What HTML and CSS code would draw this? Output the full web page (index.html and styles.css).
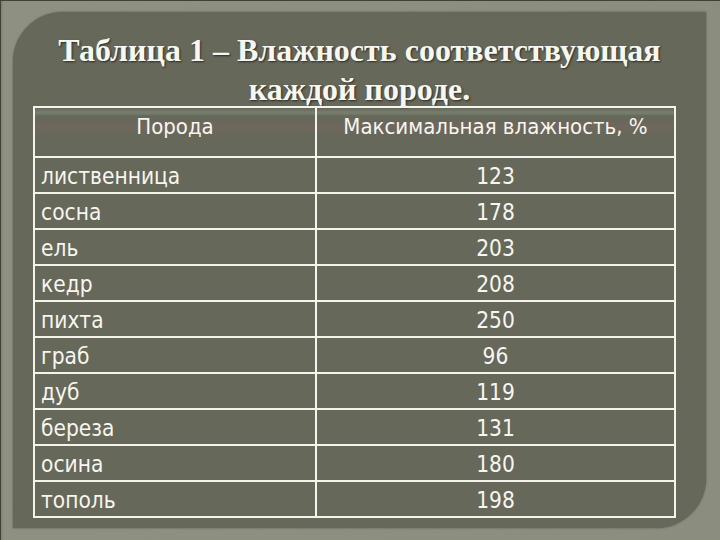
FILE: index.html
```html
<!DOCTYPE html>
<html lang="ru">
<head>
<meta charset="utf-8">
<title>Таблица 1</title>
<link rel="stylesheet" href="styles.css">
</head>
<body>
<div class="frame">
  <div class="panel">
    <h1 class="title">Таблица 1 – Влажность соответствующая<br>каждой породе.</h1>
    <table class="data">
      <thead>
        <tr><th class="c1">Порода</th><th class="c2">Максимальная влажность, %</th></tr>
      </thead>
      <tbody>
        <tr><td class="c1">лиственница</td><td class="c2">123</td></tr>
        <tr><td class="c1">сосна</td><td class="c2">178</td></tr>
        <tr><td class="c1">ель</td><td class="c2">203</td></tr>
        <tr><td class="c1">кедр</td><td class="c2">208</td></tr>
        <tr><td class="c1">пихта</td><td class="c2">250</td></tr>
        <tr><td class="c1">граб</td><td class="c2">96</td></tr>
        <tr><td class="c1">дуб</td><td class="c2">119</td></tr>
        <tr><td class="c1">береза</td><td class="c2">131</td></tr>
        <tr><td class="c1">осина</td><td class="c2">180</td></tr>
        <tr><td class="c1">тополь</td><td class="c2">198</td></tr>
      </tbody>
    </table>
  </div>
</div>
</body>
</html>
```
FILE: styles.css
```css
html, body {
  margin: 0;
  padding: 0;
}
body {
  width: 720px;
  height: 540px;
  overflow: hidden;
  background: #8b8e7e;
}
.frame {
  box-sizing: border-box;
  width: 720px;
  height: 540px;
  padding: 11px 14px 12px 12px;
  border-top: 1px solid #3f4135;
  border-left: 1px solid #3f4135;
  background:
    linear-gradient(90deg, #7f8272 0, #8e9181 3px, #8b8e7e 100%);
  display: flex;
}
.panel {
  flex: 1;
  background: #66685a;
  border-radius: 50px 0 50px 0;
  box-shadow: 0 0 2px rgba(40, 42, 34, 0.6);
  display: flex;
  flex-direction: column;
}
.title {
  margin: 19px 0 0 0;
  font-family: "Liberation Serif", "Times New Roman", serif;
  font-weight: bold;
  font-size: 32px;
  line-height: 39px;
  text-align: center;
  color: #f7f7f2;
  text-shadow: 1px 1px 2px #2a2b22;
}
.data {
  margin: -3px 0 0 20px;
  width: 643px;
  border-collapse: collapse;
  font-family: "DejaVu Sans Condensed", "DejaVu Sans", Tahoma, sans-serif;
  font-size: 22.5px;
  color: #f6f6f0;
}
.data th, .data td {
  border: 2px solid #f4f4ec;
  padding: 0 6px;
  font-weight: normal;
  line-height: 26px;
}
.data th {
  height: 42px;
  vertical-align: top;
  padding-top: 6px;
  text-align: center;
  font-size: 22px;
  background:
    linear-gradient(180deg, rgba(150, 170, 150, 0) 0, rgba(150, 175, 150, 0.35) 5px, rgba(150, 175, 150, 0) 8px, rgba(150, 100, 100, 0) 12px, rgba(150, 100, 100, 0.22) 19px, rgba(150, 100, 100, 0) 26px);
}
.data td {
  height: 32px;
  padding-top: 2px;
}
.data .c1 {
  width: 268px;
  text-align: left;
}
.data th.c1 {
  text-align: center;
}
.data .c2 {
  text-align: center;
}
```
